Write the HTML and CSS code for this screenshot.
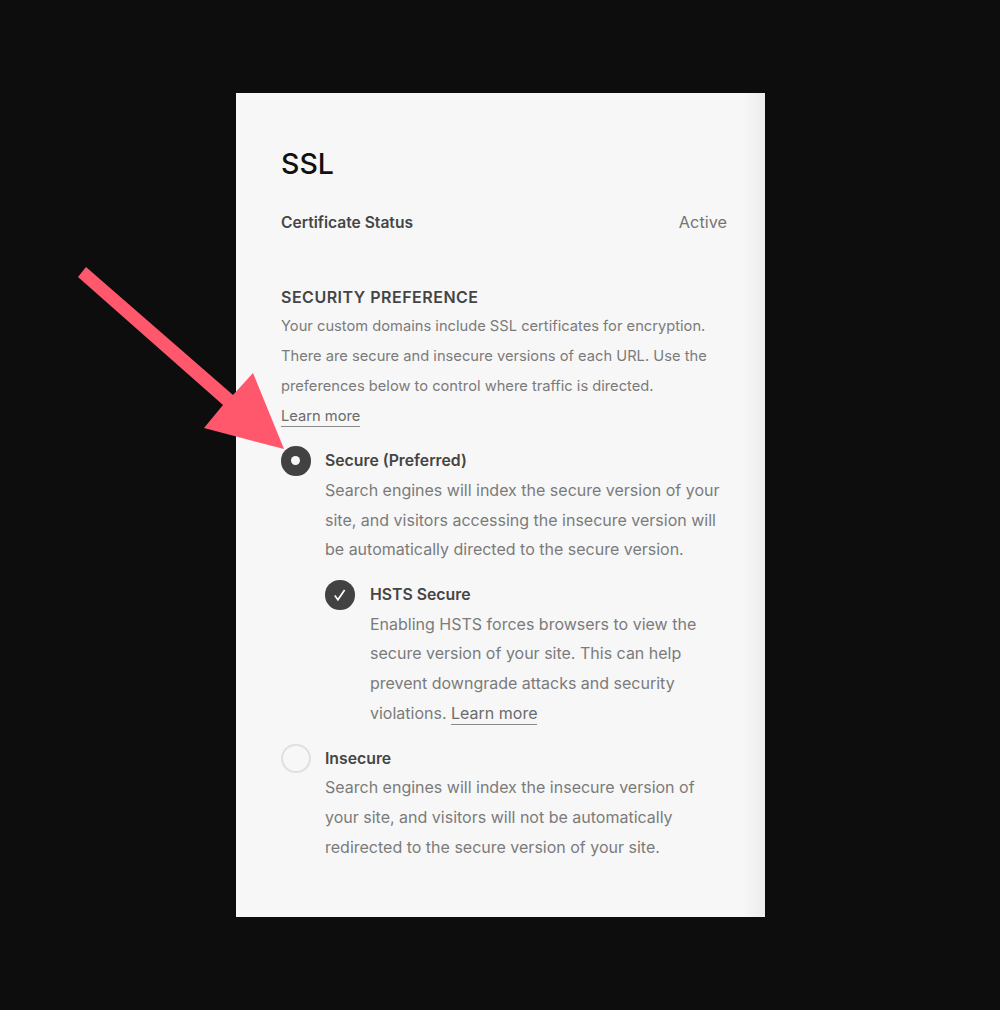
FILE: index.html
```html
<!DOCTYPE html>
<html lang="en">
<head>
    <meta charset="UTF-8">
    <title>SSL</title>
    <link rel="stylesheet" href="styles.css">
</head>
<body>
    <div class="card">
        <h1>SSL</h1>
        <div class="status">
            <span class="status-label">Certificate Status</span>
            <span class="status-value">Active</span>
        </div>

        <h2>SECURITY PREFERENCE</h2>
        <p class="text text-small">Your custom domains include SSL certificates for encryption. There are secure and insecure versions of each URL. Use the preferences below to control where traffic is directed.<br><a href="#">Learn more</a></p>

        <div class="option">
            <span class="radio radio-on"></span>
            <div class="option-body">
                <h3>Secure (Preferred)</h3>
                <p class="text">Search engines will index the secure version of your site, and visitors accessing the insecure version will be automatically directed to the secure version.</p>

                <div class="option option-nested">
                    <span class="radio radio-check">
                        <svg width="14" height="14" viewBox="0 0 14 14"><path d="M1.8 7.6 L4.9 11.8 L11.6 2" fill="none" stroke="#fff" stroke-width="1.7"/></svg>
                    </span>
                    <div class="option-body">
                        <h3>HSTS Secure</h3>
                        <p class="text">Enabling HSTS forces browsers to view the secure version of your site. This can help prevent downgrade attacks and security violations. <a href="#">Learn more</a></p>
                    </div>
                </div>
            </div>
        </div>

        <div class="option">
            <span class="radio"></span>
            <div class="option-body">
                <h3>Insecure</h3>
                <p class="text">Search engines will index the insecure version of your site, and visitors will not be automatically redirected to the secure version of your site.</p>
            </div>
        </div>
    </div>

    <!-- annotation arrow on top of the screenshot -->
    <svg class="arrow" width="1000" height="1010" viewBox="0 0 1000 1010">
        <polygon points="78,277 86,267 233,395 253,373 284,449 204,428 223,405" fill="#ff576c"/>
    </svg>
</body>
</html>
```

FILE: styles.css
```css
html, body {
    margin: 0;
    height: 1010px;
    overflow: hidden;
}

body {
    background-color: #0d0d0d;
    font-family: 'Inter', 'Liberation Sans', sans-serif;
    position: relative;
    padding-top: 93px;
    box-sizing: border-box;
}

.card {
    width: 529px;
    height: 824px;
    margin-left: 236px;
    box-sizing: border-box;
    padding: 50px 38px 0 45px;
    background: linear-gradient(to right, #f7f7f7 96%, #ececec 100%);
}

h1 {
    margin: 0;
    font-size: 28.5px;
    font-weight: 500;
    line-height: 42px;
    color: #111111;
}

.status {
    display: flex;
    justify-content: space-between;
    align-items: baseline;
    margin-top: 22px;
    line-height: 30px;
}

.status-label {
    font-size: 15.6px;
    font-weight: 600;
    color: #454545;
}

.status-value {
    font-size: 16.3px;
    color: #757575;
}

h2 {
    margin: 44.7px 0 0;
    font-size: 16px;
    font-weight: 600;
    line-height: 29.7px;
    letter-spacing: 0.5px;
    color: #454545;
}

.text {
    margin: 0;
    font-size: 16px;
    line-height: 29.7px;
    color: #7b7b7b;
}

.text-small {
    font-size: 14.7px;
}

.text a {
    color: #6b6b6b;
    text-decoration: none;
    border-bottom: 1px solid #8a8a8a;
    padding-bottom: 1px;
}

.option {
    display: flex;
    gap: 14.5px;
    margin-top: 15px;
}

.option-nested {
    gap: 15.5px;
}

.option-body {
    flex: 1;
}

h3 {
    margin: 0;
    font-size: 15.8px;
    font-weight: 600;
    line-height: 29.7px;
    color: #454545;
}

.radio {
    flex: none;
    display: flex;
    align-items: center;
    justify-content: center;
    width: 29.5px;
    height: 29.5px;
    box-sizing: border-box;
    border: 2px solid #e0e0e0;
    border-radius: 50%;
}

.radio-on {
    border: none;
    background-color: #424242;
}

.radio-on::after {
    content: "";
    width: 9px;
    height: 9px;
    border-radius: 50%;
    background-color: #f7f7f7;
}

.radio-check {
    border: none;
    background-color: #424242;
}

.arrow {
    position: absolute;
    left: 0;
    top: 0;
}
```
